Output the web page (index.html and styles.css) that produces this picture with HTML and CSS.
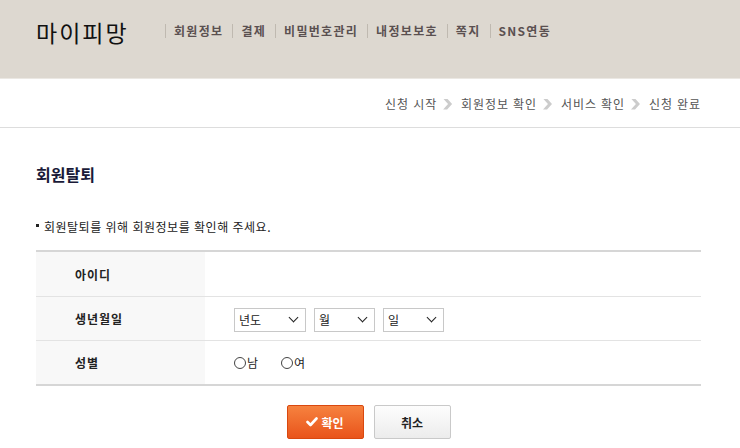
FILE: index.html
```html
<!DOCTYPE html>
<html lang="ko">
<head>
<meta charset="utf-8">
<link rel="stylesheet" href="styles.css">
</head>
<body>
<header class="top">
  <div class="logo">마이피망</div>
  <nav class="gnb">
    <a>회원정보</a><a>결제</a><a>비밀번호관리</a><a>내정보보호</a><a>쪽지</a><a>SNS연동</a>
  </nav>
</header>
<div class="steps">
  <span>신청 시작</span><i class="arr"></i>
  <span>회원정보 확인</span><i class="arr"></i>
  <span>서비스 확인</span><i class="arr"></i>
  <span>신청 완료</span>
</div>
<main class="content">
  <h1 class="title">회원탈퇴</h1>
  <p class="note">회원탈퇴를 위해 회원정보를 확인해 주세요.</p>
  <div class="form">
    <div class="row">
      <div class="lbl">아이디</div>
      <div class="val"></div>
    </div>
    <div class="row">
      <div class="lbl">생년월일</div>
      <div class="val">
        <div class="sel w72">년도<i class="chev"></i></div>
        <div class="sel w61">월<i class="chev"></i></div>
        <div class="sel w61">일<i class="chev"></i></div>
      </div>
    </div>
    <div class="row">
      <div class="lbl">성별</div>
      <div class="val">
        <label class="radio"><i class="circ"></i>남</label>
        <label class="radio"><i class="circ"></i>여</label>
      </div>
    </div>
  </div>
  <div class="btns">
    <button class="btn ok"><svg width="12" height="10" viewBox="0 0 12 10"><path d="M1.5 5 L4.5 8 L10.5 1.5" fill="none" stroke="#fff" stroke-width="2.6" stroke-linecap="round" stroke-linejoin="round"/></svg>확인</button>
    <button class="btn cancel">취소</button>
  </div>
</main>
</body>
</html>
```
FILE: styles.css
```css
* { box-sizing: border-box; }
html, body { margin: 0; padding: 0; background: #fff; }
body {
  font-family: "Noto Sans CJK KR", "Noto Sans", sans-serif;
  font-size: 12px;
  color: #333;
  width: 740px;
  height: 448px;
  overflow: hidden;
}
.top {
  height: 79px;
  background: #ddd8d0;
  border-bottom: 1px solid #ebe8e3;
  display: flex;
  align-items: flex-start;
  padding: 17px 0 0 36px;
}
.logo {
  font-size: 23px;
  line-height: 30px;
  color: #111;
  letter-spacing: 2px;
  width: 127px;
}
.gnb {
  display: flex;
  margin-top: 7px;
}
.gnb a {
  font-size: 12px;
  line-height: 14px;
  color: #5a5050;
  font-weight: 700;
  letter-spacing: 1.3px;
  padding: 0 7px 0 8px;
  border-left: 1px solid #bfb9b0;
  margin-left: 2px;
}
.steps {
  height: 49px;
  border-bottom: 1px solid #ddd;
  display: flex;
  justify-content: flex-end;
  align-items: center;
  padding: 2px 39px 0 0;
  color: #555;
  letter-spacing: 0.9px;
}
.steps span { font-size: 12px; line-height: 14px; }
.arr {
  display: inline-block;
  width: 9px;
  height: 11px;
  margin: 0 9px 0 6px;
  background: #ccc;
  clip-path: polygon(0 0, 45% 0, 100% 50%, 45% 100%, 0 100%, 55% 50%);
}
.content { padding: 0 39px 0 36px; }
.title {
  margin: 35px 0 0;
  font-size: 16px;
  line-height: 22px;
  font-weight: 700;
  color: #1a1a38;
}
.note {
  margin: 34px 0 0;
  line-height: 16px;
  color: #222;
  letter-spacing: 0.5px;
  display: flex;
  align-items: center;
}
.note::before {
  content: "";
  width: 3px;
  height: 3px;
  background: #222;
  margin: 0 5px 4px 0;
}
.form {
  margin-top: 15px;
  border-top: 2px solid #d6d6d6;
  border-bottom: 2px solid #d6d6d6;
}
.row {
  display: flex;
  height: 44px;
}
.row + .row { border-top: 1px solid #e3e3e3; }
.lbl {
  width: 169px;
  background: #f8f8f8;
  display: flex;
  align-items: center;
  padding-left: 39px;
  font-weight: 700;
  color: #222;
  letter-spacing: 1px;
}
.val {
  flex: 1;
  display: flex;
  align-items: center;
  padding-left: 29px;
  gap: 8px;
}
.sel {
  height: 24px;
  border: 1px solid #c8c8c8;
  background: #fff;
  display: flex;
  align-items: center;
  justify-content: space-between;
  padding: 0 8px 0 4px;
  color: #222;
  font-size: 12px;
  margin-top: 2px;
}
.w72 { width: 72px; }
.w61 { width: 61px; }
.chev {
  width: 7px;
  height: 7px;
  border-right: 1.6px solid #222;
  border-bottom: 1.6px solid #222;
  transform: rotate(45deg);
  margin-top: -4px;
}
.radio {
  display: flex;
  align-items: center;
  color: #222;
  margin-right: 15px;
}
.circ {
  width: 12px;
  height: 12px;
  border: 1px solid #444;
  border-radius: 50%;
  margin-right: 1px;
}
.btns {
  display: flex;
  justify-content: center;
  gap: 10px;
  margin-top: 19px;
}
.btn {
  width: 77px;
  height: 34px;
  font-family: inherit;
  font-size: 12px;
  font-weight: 700;
  display: flex;
  align-items: center;
  justify-content: center;
  gap: 3px;
  border-radius: 2px;
  padding: 0;
}
.ok {
  background: linear-gradient(#f6823f, #e9541b);
  border: 1px solid #d9480f;
  color: #fff;
}
.cancel {
  background: linear-gradient(#fdfdfd, #ececec);
  border: 1px solid #c9c9c9;
  color: #222;
}
```
